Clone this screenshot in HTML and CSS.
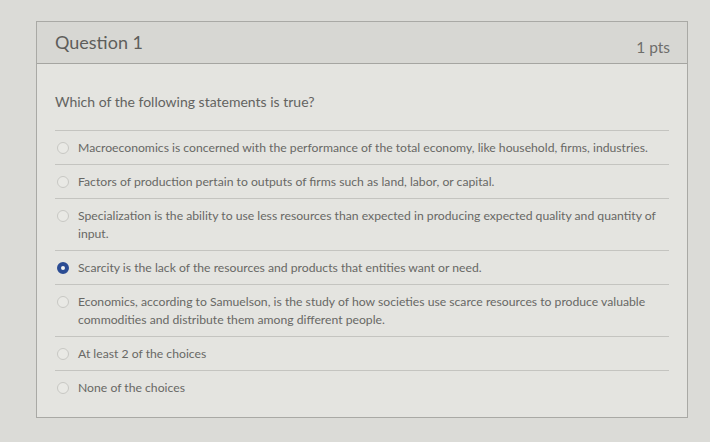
FILE: index.html
```html
<!DOCTYPE html>
<html lang="en">
<head>
<meta charset="utf-8">
<title>Question 1</title>
<link rel="stylesheet" href="styles.css">
</head>
<body>
<div class="page">
  <div class="card">
    <div class="card-header">
      <span class="q-title">Question 1</span>
      <span class="q-pts">1 pts</span>
    </div>
    <div class="card-body">
      <p class="q-text">Which of the following statements is true?</p>
      <ul class="answers">
        <li class="answer"><span class="radio"></span><span class="a-text">Macroeconomics is concerned with the performance of the total economy, like household, firms, industries.</span></li>
        <li class="answer"><span class="radio"></span><span class="a-text">Factors of production pertain to outputs of firms such as land, labor, or capital.</span></li>
        <li class="answer"><span class="radio"></span><span class="a-text">Specialization is the ability to use less resources than expected in producing expected quality and quantity of input.</span></li>
        <li class="answer"><span class="radio checked"></span><span class="a-text">Scarcity is the lack of the resources and products that entities want or need.</span></li>
        <li class="answer"><span class="radio"></span><span class="a-text">Economics, according to Samuelson, is the study of how societies use scarce resources to produce valuable commodities and distribute them among different people.</span></li>
        <li class="answer"><span class="radio"></span><span class="a-text">At least 2 of the choices</span></li>
        <li class="answer last"><span class="radio"></span><span class="a-text">None of the choices</span></li>
      </ul>
    </div>
  </div>
</div>
</body>
</html>
```
FILE: styles.css
```css
html, body {
  margin: 0;
  padding: 0;
}
body {
  background: #dbdbd7;
  font-family: Lato, "Liberation Sans", sans-serif;
  color: #666663;
  width: 710px;
  height: 442px;
  overflow: hidden;
}
.page {
  padding: 21px 20px 0 36px;
}
.card {
  width: 652px;
  height: 397px;
  border: 1px solid #a9a9a5;
  background: #e4e4e0;
  box-sizing: border-box;
}
.card-header {
  height: 42px;
  box-sizing: border-box;
  background: #d7d7d3;
  border-bottom: 1px solid #a5a5a1;
  display: flex;
  align-items: center;
  justify-content: space-between;
  padding: 0 17px 0 18px;
}
.q-title {
  font-size: 18px;
  color: #5e5e5b;
  margin-top: -2px;
}
.q-pts {
  font-size: 15.5px;
  color: #6e6e6b;
  margin-top: 8px;
}
.card-body {
  padding: 29px 18px 0 18px;
}
.q-text {
  margin: 0 0 19px 0;
  font-size: 14px;
  line-height: 18px;
  color: #636360;
}
.answers {
  list-style: none;
  margin: 0;
  padding: 0;
}
.answer {
  display: flex;
  align-items: flex-start;
  gap: 9px;
  border-top: 1px solid #c4c4c0;
  padding: 8px 8px 7px 2px;
  font-size: 12.2px;
  line-height: 18px;
}
.radio {
  flex: none;
  width: 10px;
  height: 10px;
  margin-top: 3px;
  border-radius: 50%;
  border: 1px solid #c8c8c4;
  background: #e9e9e5;
}
.radio.checked {
  width: 4px;
  height: 4px;
  border: 4px solid #2b4c93;
  background: #f4f4f2;
  margin-top: 3px;
}
.a-text {
  color: #686865;
}
```
